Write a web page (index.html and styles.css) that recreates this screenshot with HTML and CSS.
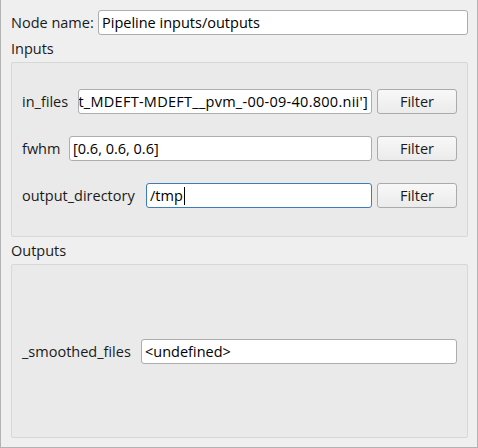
FILE: index.html
```html
<!DOCTYPE html>
<html>
<head>
<meta charset="utf-8">
<link rel="stylesheet" href="styles.css">
</head>
<body>
<div class="window">
  <div class="name-row">
    <span class="label label-node">Node name:</span>
    <div class="field"><span class="field-text">Pipeline inputs/outputs</span></div>
  </div>

  <div class="section-title">Inputs</div>
  <div class="group group-inputs">
    <div class="row">
      <span class="label label-in-files">in_files</span>
      <div class="field field-scrolled"><span class="field-text">t_MDEFT-MDEFT__pvm_-00-09-40.800.nii']</span></div>
      <button class="btn">Filter</button>
    </div>
    <div class="row">
      <span class="label label-fwhm">fwhm</span>
      <div class="field"><span class="field-text">[0.6, 0.6, 0.6]</span></div>
      <button class="btn">Filter</button>
    </div>
    <div class="row">
      <span class="label label-outdir">output_directory</span>
      <div class="field field-focus"><span class="field-text">/tmp</span><span class="caret"></span></div>
      <button class="btn">Filter</button>
    </div>
  </div>

  <div class="section-title">Outputs</div>
  <div class="group group-outputs">
    <div class="row">
      <span class="label label-smoothed">_smoothed_files</span>
      <div class="field"><span class="field-text">&lt;undefined&gt;</span></div>
    </div>
  </div>
</div>
</body>
</html>
```

FILE: styles.css
```css
* { box-sizing: border-box; }

html, body {
  margin: 0;
  padding: 0;
  background: #efefef;
}

body {
  font-family: "Open Sans", "DejaVu Sans", sans-serif;
  font-size: 14.5px;
  color: #1a1a1a;
}

.window {
  width: 478px;
  height: 448px;
  border-left: 1px solid #b3b3b3;
  border-right: 1px solid #b3b3b3;
  border-bottom: 1px solid #b3b3b3;
  padding: 10px 9px 9px 10px;
  display: flex;
  flex-direction: column;
  background: #efefef;
}

.name-row {
  display: flex;
  align-items: center;
  height: 25px;
  flex: none;
}

.label {
  flex: none;
  white-space: nowrap;
  line-height: 18px;
}

.label-node { width: 81px; margin-right: 6px; }
.label-in-files { width: 50px; margin-right: 6px; }
.label-fwhm { width: 41px; margin-right: 6px; }
.label-outdir { width: 118px; margin-right: 6px; }
.label-smoothed { width: 113px; margin-right: 6px; }

.field {
  flex: 1;
  min-width: 0;
  height: 25px;
  background: #ffffff;
  border: 1px solid #adadad;
  border-radius: 3px;
  display: flex;
  align-items: center;
  padding: 0 3px;
  overflow: hidden;
  white-space: nowrap;
  color: #000;
}

.field-scrolled {
  justify-content: flex-end;
  padding: 0 3px 0 0;
  letter-spacing: 0.27px;
}

.field-focus {
  border-color: #3d7db6;
}

.field-text {
  flex: none;
  line-height: 18px;
}

.caret {
  flex: none;
  width: 1px;
  height: 18px;
  background: #000;
  margin-left: 1px;
}

.section-title {
  flex: none;
  height: 27px;
  display: flex;
  align-items: flex-end;
  line-height: 18px;
  padding-bottom: 4px;
}

.group {
  background: #eaeaea;
  border: 1px solid #d7d7d7;
  border-radius: 2px;
  padding: 0 10px;
  display: flex;
  flex-direction: column;
}

.group-inputs {
  flex: none;
  height: 175px;
  padding-top: 26px;
  gap: 22px;
}

.group-outputs {
  flex: 1;
  justify-content: center;
  padding-top: 1px;
}

.row {
  display: flex;
  align-items: center;
  height: 25px;
  flex: none;
}

.btn {
  flex: none;
  width: 80px;
  height: 25px;
  margin-left: 5px;
  border: 1px solid #ababab;
  border-radius: 3px;
  background: linear-gradient(#f8f8f8, #ebebeb);
  font-family: inherit;
  font-size: 14.5px;
  color: #1a1a1a;
  padding: 0;
  line-height: 18px;
}
```
